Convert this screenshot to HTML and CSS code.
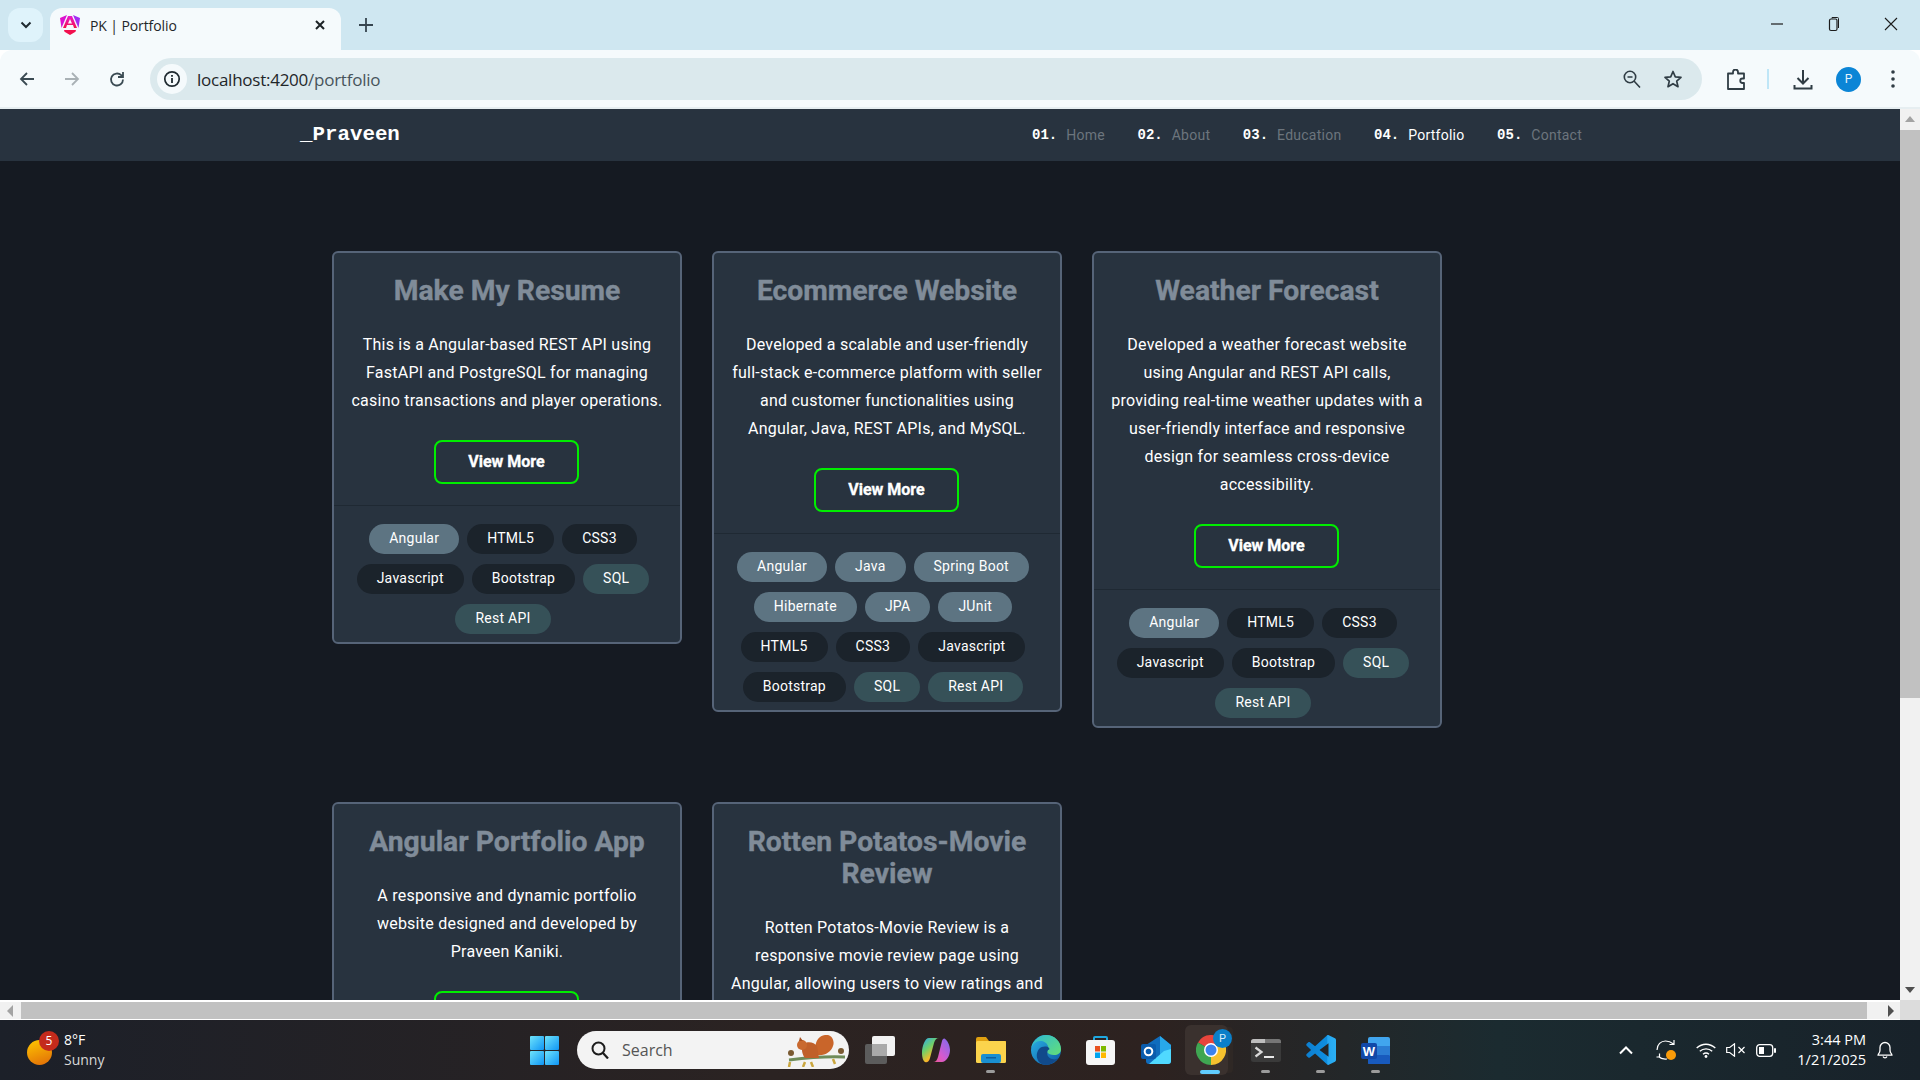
FILE: index.html
```html
<!DOCTYPE html>
<html lang="en">
<head>
<meta charset="utf-8">
<title>PK | Portfolio</title>
<link rel="stylesheet" href="styles.css">
</head>
<body>
<div class="screen">
  <header class="tabstrip">
    <div class="tabsearch"><svg width="12" height="8" viewBox="0 0 12 8"><path d="M1.500 1.500 6 6l4.500-4.500" fill="none" stroke="#1f2a30" stroke-width="2"/></svg></div>
    <div class="tab">
      <svg class="favicon" width="20" height="20" viewBox="0 0 20 20"><defs><linearGradient id="ng" x1="0" y1="0" x2="1" y2="1"><stop offset="0" stop-color="#f00bc0"/><stop offset="1" stop-color="#b81fe8"/></linearGradient><linearGradient id="ng2" x1="0" y1="0" x2="0" y2="1"><stop offset="0" stop-color="#e81ad0"/><stop offset="1" stop-color="#f5114a"/></linearGradient></defs><path d="M7 0 1.500 13 0 3z" fill="url(#ng)"/><path d="M13 0 18.500 13 20 3z" fill="#a32cf2"/><path d="M8 1h4l5 12h-3l-1-3H7l-1 3H3z" fill="url(#ng2)"/><path d="M10 4 8 8.500h4z" fill="#f6fafc"/><path d="M4 15h12l-.5 1.800L10 20l-5.500-3.200z" fill="#f2104e"/></svg>
      <span class="tabtitle">PK | Portfolio</span>
      <svg class="tabclose" width="12" height="12" viewBox="0 0 12 12"><path d="M2 2l8 8M10 2l-8 8" stroke="#1c2226" stroke-width="2"/></svg>
    </div>
    <svg class="newtab" width="14" height="14" viewBox="0 0 14 14"><path d="M7 0v14M0 7h14" stroke="#36454f" stroke-width="1.800"/></svg>
    <div class="wincontrols">
      <svg width="14" height="14" viewBox="0 0 14 14"><path d="M1 7h12" stroke="#1c1c1c" stroke-width="1.200"/></svg>
      <svg width="14" height="24" viewBox="0 0 14 24"><rect x="2.500" y="7" width="7.500" height="11.500" rx="1.500" fill="none" stroke="#1c1c1c" stroke-width="1.200"/><path d="M5 6.500V5.500h5.500a1 1 0 0 1 1 1V16" fill="none" stroke="#1c1c1c" stroke-width="1"/></svg>
      <svg width="14" height="14" viewBox="0 0 14 14"><path d="M1 1l12 12M13 1L1 13" stroke="#1c1c1c" stroke-width="1.100"/></svg>
    </div>
  </header>

  <div class="toolbar">
    <svg class="navicon" width="18" height="18" viewBox="0 0 18 18"><path d="M16 9H3M9 3 3 9l6 6" fill="none" stroke="#3a4a52" stroke-width="1.800"/></svg>
    <svg class="navicon" width="18" height="18" viewBox="0 0 18 18"><path d="M2 9h13M9 3l6 6-6 6" fill="none" stroke="#a9b1b5" stroke-width="1.800"/></svg>
    <svg class="navicon" width="18" height="18" viewBox="0 0 18 18"><path d="M15 9.500a6 6 0 1 1-1.800-4.300L15 7M15 2v5h-5" fill="none" stroke="#3a4a52" stroke-width="1.800"/></svg>
    <div class="omnibox">
      <div class="siteinfo"><svg width="18" height="18" viewBox="0 0 18 18"><circle cx="9" cy="9" r="7.200" fill="none" stroke="#1f2a30" stroke-width="1.700"/><path d="M9 8v5M9 5v1.800" stroke="#1f2a30" stroke-width="1.800"/></svg></div>
      <span class="url">localhost:4200<span class="urlpath">/portfolio</span></span>
      <svg class="omniicon" width="18" height="18" viewBox="0 0 18 18"><circle cx="7" cy="7" r="5.700" fill="none" stroke="#2f3c44" stroke-width="1.600"/><path d="M11 11l6 6.500M4.500 7h5" stroke="#2f3c44" stroke-width="1.600"/></svg>
      <svg class="omniicon star" width="20" height="19" viewBox="0 0 20 19"><path d="M10 1.500l2.300 5.300 5.700.5-4.300 3.800 1.300 5.600-5-3-5 3 1.300-5.600L2 7.300l5.700-.5z" fill="none" stroke="#2f3c44" stroke-width="1.700" stroke-linejoin="round"/></svg>
    </div>
    <svg class="ext" width="20" height="21" viewBox="0 0 20 21"><path d="M2 4.500h5V3a2.500 2.500 0 0 1 5 0v1.500h6v5h-1.500a2 2 0 0 0 0 4.500H18v6H2z" fill="none" stroke="#2f3c44" stroke-width="1.800" stroke-linejoin="round"/></svg>
    <span class="tooldivider"></span>
    <svg class="dl" width="20" height="21" viewBox="0 0 20 21"><path d="M10 1v13M4.500 9l5.500 5.500L15.500 9M1.500 16v3.500h17V16" fill="none" stroke="#2f3c44" stroke-width="2"/></svg>
    <span class="avatar">P</span>
    <svg class="kebab" width="6" height="20" viewBox="0 0 6 20"><circle cx="3" cy="3" r="1.800" fill="#2f3c44"/><circle cx="3" cy="10" r="1.800" fill="#2f3c44"/><circle cx="3" cy="17" r="1.800" fill="#2f3c44"/></svg>
  </div>

  <div class="viewport">
    <div class="pagewrap">
      <div class="page">
        <nav class="sitenav">
          <div class="logo">_Praveen</div>
          <ul class="navlinks">
            <li><b>01.</b><a>Home</a></li>
            <li><b>02.</b><a>About</a></li>
            <li><b>03.</b><a>Education</a></li>
            <li><b>04.</b><a class="active">Portfolio</a></li>
            <li><b>05.</b><a>Contact</a></li>
          </ul>
        </nav>
        <main class="grid">
          <article class="card">
            <div class="cardbody">
              <h2>Make My Resume</h2>
              <p>This is a Angular-based REST API using FastAPI and PostgreSQL for managing casino transactions and player operations.</p>
              <a class="more">View More</a>
            </div>
            <div class="tags">
              <span class="tag fw">Angular</span><span class="tag dk">HTML5</span><span class="tag dk">CSS3</span><span class="tag dk">Javascript</span><span class="tag dk">Bootstrap</span><span class="tag db">SQL</span><span class="tag db">Rest API</span>
            </div>
          </article>
          <article class="card">
            <div class="cardbody">
              <h2>Ecommerce Website</h2>
              <p>Developed a scalable and user-friendly full-stack e-commerce platform with seller and customer functionalities using Angular, Java, REST APIs, and MySQL.</p>
              <a class="more">View More</a>
            </div>
            <div class="tags">
              <span class="tag fw">Angular</span><span class="tag fw">Java</span><span class="tag fw">Spring Boot</span><span class="tag fw">Hibernate</span><span class="tag fw">JPA</span><span class="tag fw">JUnit</span><span class="tag dk">HTML5</span><span class="tag dk">CSS3</span><span class="tag dk">Javascript</span><span class="tag dk">Bootstrap</span><span class="tag db">SQL</span><span class="tag db">Rest API</span>
            </div>
          </article>
          <article class="card">
            <div class="cardbody">
              <h2>Weather Forecast</h2>
              <p>Developed a weather forecast website using Angular and REST API calls, providing real-time weather updates with a user-friendly interface and responsive design for seamless cross-device accessibility.</p>
              <a class="more">View More</a>
            </div>
            <div class="tags">
              <span class="tag fw">Angular</span><span class="tag dk">HTML5</span><span class="tag dk">CSS3</span><span class="tag dk">Javascript</span><span class="tag dk">Bootstrap</span><span class="tag db">SQL</span><span class="tag db">Rest API</span>
            </div>
          </article>
          <article class="card">
            <div class="cardbody">
              <h2>Angular Portfolio App</h2>
              <p>A responsive and dynamic portfolio website designed and developed by Praveen Kaniki.</p>
              <a class="more">View More</a>
            </div>
          </article>
          <article class="card">
            <div class="cardbody">
              <h2>Rotten Potatos-Movie Review</h2>
              <p>Rotten Potatos-Movie Review is a responsive movie review page using Angular, allowing users to view ratings and reviews.</p>
              <a class="more">View More</a>
            </div>
          </article>
        </main>
      </div>
      <div class="vscroll">
        <span class="arrow up"></span>
        <div class="vtrack"><div class="vthumb"></div></div>
        <span class="arrow down"></span>
      </div>
    </div>
    <div class="hscroll">
      <span class="harrow left"></span>
      <div class="htrack"><div class="hthumb"></div></div>
      <span class="harrow right"></span>
      <span class="corner"></span>
    </div>
  </div>

  <footer class="taskbar">
    <div class="weather">
      <span class="sun"><span class="badge">5</span></span>
      <div class="wtext"><span>8°F</span><span class="wsub">Sunny</span></div>
    </div>
    <div class="slot">
      <svg width="29" height="29" viewBox="0 0 30 30"><defs><linearGradient id="win" x1="0" y1="0" x2="1" y2="1"><stop offset="0" stop-color="#6fe4fb"/><stop offset="1" stop-color="#0f95f5"/></linearGradient></defs><rect width="14.500" height="14.500" rx="1" fill="url(#win)"/><rect x="15.500" width="14.500" height="14.500" rx="1" fill="url(#win)"/><rect y="15.500" width="14.500" height="14.500" rx="1" fill="url(#win)"/><rect x="15.500" y="15.500" width="14.500" height="14.500" rx="1" fill="url(#win)"/></svg>
    </div>
    <div class="search">
      <svg width="18" height="18" viewBox="0 0 18 18"><circle cx="7.500" cy="7.500" r="6" fill="none" stroke="#1c1c1c" stroke-width="2"/><path d="M12 12l5 5.500" stroke="#1c1c1c" stroke-width="2.200"/></svg>
      <span>Search</span>
      <svg class="squirrel" width="66" height="32" viewBox="0 0 66 32"><path d="M6 25c16-2 36-4 56-3" fill="none" stroke="#6f8c5a" stroke-width="3"/><path d="M34 20C30 10 34 1 42 0c7-1 10 6 8 11-2 6-8 10-16 9z" fill="#c9652a"/><path d="M20 9c5-3 11-2 14 2l2 12H22c-3-3-4-10-2-14z" fill="#c0602a"/><circle cx="19" cy="10" r="5" fill="#c9692f"/><path d="M16 6l1-4 3 4z" fill="#a8501f"/><circle cx="8" cy="18" r="3" fill="#7a5a32"/><circle cx="58" cy="16" r="3" fill="#7a5a32"/><path d="M7 27l-1 5M22 27l-2 5M28 27l2 5M50 24l2 5" stroke="#cba73f" stroke-width="2.500"/></svg>
    </div>
    <div class="slot first">
      <svg width="31" height="28" viewBox="0 0 31 28"><rect x="0" y="8" width="22" height="20" rx="2" fill="#5c5c5c"/><rect x="7" y="0" width="23" height="20" rx="2" fill="#f2f2f2"/><rect x="7" y="8" width="15" height="12" fill="#aaa"/></svg>
    </div>
    <div class="slot">
      <svg width="28" height="26" viewBox="0 0 28 26"><defs><linearGradient id="cop" x1="0" y1="0" x2=".6" y2="1"><stop offset="0" stop-color="#2aa8f0"/><stop offset=".45" stop-color="#6fd06a"/><stop offset=".8" stop-color="#f4bc2a"/><stop offset="1" stop-color="#f0703a"/></linearGradient><linearGradient id="cop2" x1="1" y1="0" x2="0" y2="1"><stop offset="0" stop-color="#7a6cf0"/><stop offset=".6" stop-color="#d45ad0"/><stop offset="1" stop-color="#f05a90"/></linearGradient></defs><path d="M7 1h10c-3 0-4 2-5 5L8 21c-1 4-3 5-5 4-2-1-3-5-3-9C0 9 3 1 7 1z" fill="url(#cop)"/><path d="M20 25h-9c3 0 4-2 5-5l4-16c.5-2 2-3 3-2 2 1 5 6 5 11 0 6-4 12-8 12z" fill="url(#cop2)"/></svg>
    </div>
    <div class="slot">
      <svg width="30" height="26" viewBox="0 0 30 26"><path d="M0 2a2 2 0 0 1 2-2h8l3 4h17v20H0z" fill="#e0a010"/><rect y="4" width="30" height="22" rx="1.500" fill="#fbd34c"/><rect x="5" y="17" width="20" height="9" rx="2" fill="#1a8fd1"/><rect x="10" y="20" width="10" height="1.500" fill="#0f5f9e"/></svg>
      <i class="indicator"></i>
    </div>
    <div class="slot">
      <svg width="30" height="30" viewBox="0 0 30 30"><defs><linearGradient id="edge" x1="0" y1="0" x2="1" y2="1"><stop offset="0" stop-color="#2bb4e6"/><stop offset="1" stop-color="#0c59a4"/></linearGradient><linearGradient id="edge2" x1="0" y1="0" x2="1" y2=".8"><stop offset="0" stop-color="#2cb8d8"/><stop offset="1" stop-color="#5fdc7f"/></linearGradient></defs><circle cx="15" cy="15" r="15" fill="url(#edge)"/><path d="M15 0c9 0 15 7 15 14 0 4-3 6-7 6-3 0-6-1-7-3-1-2 2-3 1-6-1-3-4-5-8-5-4 0-7 3-9 7C2 6 8 0 15 0z" fill="url(#edge2)"/><path d="M17 15c-2 4 0 8 4 9 3 1 5 0 6-1-3 4-7 7-12 7-3 0-5-1-7-3-3-4-3-9 0-13 3-3 8-3 10-1 1 1 0 2-1 2z" fill="#114a8b"/></svg>
    </div>
    <div class="slot">
      <svg width="29" height="29" viewBox="0 0 29 29"><path d="M8 5V2a1 1 0 0 1 1-1h11a1 1 0 0 1 1 1v3" fill="none" stroke="#1fa8e0" stroke-width="2"/><rect y="4" width="29" height="25" rx="3" fill="#f6f6f6"/><rect x="9" y="10" width="5" height="5.500" fill="#e8511f"/><rect x="15" y="10" width="5" height="5.500" fill="#7fba00"/><rect x="9" y="16.500" width="5" height="5.500" fill="#00a4ef"/><rect x="15" y="16.500" width="5" height="5.500" fill="#ffb900"/></svg>
    </div>
    <div class="slot">
      <svg width="30" height="28" viewBox="0 0 30 28"><path d="M5 9 19 0l11 9v16a3 3 0 0 1-3 3H8a3 3 0 0 1-3-3z" fill="#0f6cbd"/><path d="M19 0l11 9v6L19 22z" fill="#28a8ea"/><path d="M8 28l15-13 7-2v12a3 3 0 0 1-3 3z" fill="#50d9ff"/><rect y="8" width="15" height="15" rx="2" fill="#0a5cad"/><circle cx="7.500" cy="15.500" r="3.800" fill="none" stroke="#fff" stroke-width="2"/></svg>
    </div>
    <div class="slot chrome">
      <span class="hover"></span>
      <svg width="30" height="30" viewBox="0 0 30 30"><path d="M15 15 2 7.500A15 15 0 0 1 28 7.500z" fill="#e8453c"/><path d="M15 15 28 7.500A15 15 0 0 1 15 30z" fill="#f5c12e"/><path d="M15 15V30A15 15 0 0 1 2 7.500z" fill="#3fa652"/><circle cx="15" cy="15" r="7" fill="#fff"/><circle cx="15" cy="15" r="5.500" fill="#3b82ee"/></svg>
      <span class="pbadge">P</span>
      <i class="indicator active"></i>
    </div>
    <div class="slot">
      <svg width="30" height="23" viewBox="0 0 30 23"><rect width="30" height="23" rx="2.500" fill="#3a3a3a"/><path d="M2.500 0h12v4H0V2.500A2.500 2.500 0 0 1 2.500 0z" fill="#bdbdbd"/><path d="M14.500 0h13A2.500 2.500 0 0 1 30 2.500V4H14.500z" fill="#767676"/><path d="M4.500 8.500l6 4.500-6 4.500" fill="none" stroke="#d8d8d8" stroke-width="2.200"/><path d="M13 18h10" stroke="#e8e8e8" stroke-width="2"/></svg>
      <i class="indicator"></i>
    </div>
    <div class="slot">
      <svg width="30" height="30" viewBox="0 0 100 100"><defs><linearGradient id="vs" x1="0" y1="0" x2="1" y2="0"><stop offset="0" stop-color="#0d7fd0"/><stop offset=".7" stop-color="#0f8fe0"/><stop offset=".72" stop-color="#25a6f0"/><stop offset="1" stop-color="#2bb0f5"/></linearGradient></defs><path fill="url(#vs)" fill-rule="evenodd" d="M70.900 99.300c1.600.6 3.400.6 5-.2l20.600-9.900c2.200-1 3.500-3.200 3.500-5.600V16.400c0-2.400-1.400-4.600-3.500-5.600L75.900.9c-2-1-4.500-.8-6.200.5L30.200 37.400 13 24.300c-1.600-1.200-3.800-1.100-5.300.2l-5.500 5c-1.800 1.600-1.800 4.500 0 6.100L17 50 2.200 63.500c-1.800 1.600-1.800 4.500 0 6.100l5.500 5c1.500 1.300 3.700 1.400 5.300.2l17.200-13.100 39.500 36c.6.6 1.300 1 2.200 1.300zM75 27.300 45 50l30 22.700z"/></svg>
      <i class="indicator"></i>
    </div>
    <div class="slot">
      <svg width="29" height="27" viewBox="0 0 29 27"><rect x="7" width="22" height="27" rx="2" fill="#41a5ee"/><rect x="7" y="9" width="22" height="9" fill="#2b7cd3"/><rect x="7" y="18" width="22" height="9" rx="1" fill="#185abd"/><rect y="6" width="16" height="16" rx="2" fill="#1149a8"/><text x="8" y="19" class="wordw">W</text></svg>
      <i class="indicator"></i>
    </div>
    <div class="tray">
      <svg class="chev" width="14" height="9" viewBox="0 0 14 9"><path d="M1 7.500 7 1.500l6 6" fill="none" stroke="#fff" stroke-width="2"/></svg>
      <svg class="sync" width="20" height="20" viewBox="0 0 20 20"><path d="M1 10C1 4.500 5 1 9.500 1c3 0 5.500 1 8 3M18 0v4.500h-4.500M11 19c-4 .5-6.500-.5-8.500-2.500M3.500 13.500V17H.5" fill="none" stroke="#fff" stroke-width="1.200"/><circle cx="15" cy="15" r="5" fill="#f99b09"/></svg>
      <svg class="wifi" width="20" height="15" viewBox="0 0 20 15"><path d="M.7 5c5.500-5 13-5 18.600 0M3.800 8.300c3.500-3.300 9-3.300 12.400 0M7 11.200c1.800-1.400 4.200-1.400 6 0" fill="none" stroke="#fff" stroke-width="1.400"/><circle cx="10" cy="13.500" r="1.400" fill="#fff"/></svg>
      <svg class="vol" width="19" height="14" viewBox="0 0 19 14"><path d="M.7 4.500h3L8.500.8v12.400l-4.800-3.700h-3z" fill="none" stroke="#fff" stroke-width="1.200"/><path d="M12.500 4l6 6M18.500 4l-6 6" stroke="#fff" stroke-width="1.200"/></svg>
      <svg class="batt" width="20" height="13" viewBox="0 0 20 13"><rect x=".7" y=".7" width="16" height="11.600" rx="3" fill="none" stroke="#fff" stroke-width="1.300"/><rect x="3" y="3" width="5" height="7" fill="#fff"/><rect x="18" y="4" width="2" height="5" rx="1" fill="#fff"/></svg>
      <div class="clock"><span>3:44 PM</span><span>1/21/2025</span></div>
      <svg class="bell" width="16" height="18" viewBox="0 0 16 18"><path d="M1.500 13c1-1 1.500-2 1.500-4V6.500a5 5 0 0 1 10 0V9c0 2 .5 3 1.500 4l.5 1.200H1zM6 15.500a2.200 2.200 0 0 0 4 0" fill="none" stroke="#fff" stroke-width="1.300" stroke-linejoin="round"/></svg>
    </div>
  </footer>
</div>
</body>
</html>
```
FILE: styles.css
```css
* { box-sizing: border-box; }
html, body { margin: 0; height: 100%; overflow: hidden; }
body { font-family: Roboto, "Liberation Sans", sans-serif; }
.screen { width: 1920px; height: 1080px; display: flex; flex-direction: column; overflow: hidden; }

/* Browser tab strip */
.tabstrip { height: 50px; background: #cfe7f1; display: flex; align-items: flex-start; flex: none; }
.tabsearch { width: 35px; height: 34px; margin: 8px 0 0 8px; border-radius: 12px; background: #dff3fb; display: flex; align-items: center; justify-content: center; flex: none; }
.tab { width: 291px; height: 42px; margin: 8px 0 0 7px; background: #f5fafc; border-radius: 12px 12px 0 0; display: flex; align-items: center; padding: 0 15px 8px 10px; flex: none; }
.favicon { flex: none; }
.tabtitle { font: 14px "Open Sans", "Noto Sans", sans-serif; color: #1f2629; margin-left: 10px; flex: 1; letter-spacing: -.1px; }
.newtab { margin: 18px 0 0 18px; flex: none; }
.wincontrols { margin-left: auto; display: flex; align-items: center; height: 24px; margin-top: 12px; gap: 43px; padding-right: 22px; }

/* Browser toolbar */
.toolbar { height: 59px; background: #f5fafc; border-radius: 12px 12px 0 0; display: flex; align-items: center; padding: 1px 0 0 18px; flex: none; border-bottom: 2px solid #e6eef1; }
.navicon { margin-right: 27px; flex: none; }
.omnibox { width: 1552px; height: 42px; margin-left: -3px; background: #dbe9ed; border-radius: 21px; display: flex; align-items: center; padding: 0 19px 0 7px; flex: none; }
.siteinfo { width: 30px; height: 30px; border-radius: 50%; background: #f5fafc; display: flex; align-items: center; justify-content: center; flex: none; }
.url { font: 17px "Open Sans", "Noto Sans", sans-serif; color: #1f2629; margin-left: 10px; flex: 1; letter-spacing: -.25px; }
.urlpath { color: #47545b; }
.omniicon { margin-left: 22px; flex: none; }
.omniicon.star { margin-left: 22px; }
.ext { margin-left: 24px; flex: none; }
.tooldivider { width: 2px; height: 20px; background: #bfe6f7; margin-left: 21px; flex: none; }
.dl { margin-left: 24px; flex: none; }
.avatar { width: 25px; height: 25px; border-radius: 50%; background: #0b85d6; color: #e8f4fb; font-size: 12px; display: flex; align-items: center; justify-content: center; margin-left: 23px; flex: none; }
.kebab { margin-left: 29px; flex: none; }

/* Browser viewport */
.viewport { height: 911px; flex: none; display: flex; flex-direction: column; background: #151a22; }
.pagewrap { display: flex; height: 891px; flex: none; overflow: hidden; }
.page { width: 1900px; flex: none; background: #151a22; overflow: hidden; }

.sitenav { height: 52px; background: #28333f; display: flex; align-items: center; padding: 0 0 1px 300px; }
.logo { font: bold 20.800px "Liberation Mono", monospace; color: #fff; width: 732px; }
.navlinks { list-style: none; display: flex; margin: 0; padding: 0; gap: 32.600px; font-size: 14px; }
.navlinks li { display: flex; align-items: center; gap: 9px; white-space: nowrap; }
.navlinks b { font: bold 14px "Liberation Mono", monospace; color: #fff; }
.navlinks a { color: #6c757d; letter-spacing: .25px; }
.navlinks a.active { color: #fff; }

.grid { display: grid; grid-template-columns: repeat(3, 350px); column-gap: 30px; row-gap: 74px; align-items: start; padding: 90px 0 0 332px; }
.card { background: #28333f; border: 2px solid #566478; border-radius: 6px; }
.cardbody { padding: 22px 16px 21px; text-align: center; }
.card h2 { margin: 0 0 24px; font-size: 28.300px; line-height: 32px; font-weight: 700; color: #808c99; -webkit-text-stroke: .4px #808c99; }
.card p { margin: 0 0 25px; font-size: 16px; line-height: 28px; letter-spacing: .24px; color: #fff; }
.more { display: block; width: 145px; height: 44px; margin: 0 0 0 84px; border: 2px solid #00ee00; border-radius: 8px; font-weight: 700; font-size: 16px; line-height: 40px; color: #fff; -webkit-text-stroke: .35px #fff; }
.tags { border-top: 1px solid #1f2933; padding: 18px 16px 8px; display: flex; flex-wrap: wrap; justify-content: center; gap: 10px 0; }
.tag { height: 30px; line-height: 29px; padding: 0 20px; margin-right: 8px; border-radius: 15px; font-size: 14px; letter-spacing: .25px; color: #fff; white-space: nowrap; }
.fw { background: #5d7482; }
.dk { background: #1b232b; }
.db { background: #365158; }

/* Scrollbars */
.vscroll { width: 20px; flex: none; background: #f1f1f1; display: flex; flex-direction: column; align-items: center; }
.vtrack { flex: 1; width: 100%; }
.vthumb { width: 100%; height: 568px; background: #c1c1c1; margin-top: 1px; }
.arrow { width: 0; height: 0; border-left: 5px solid transparent; border-right: 5px solid transparent; margin: 7px 0; flex: none; }
.arrow.up { border-bottom: 6px solid #a3a3a3; }
.arrow.down { border-top: 6px solid #505050; }
.hscroll { height: 20px; flex: none; background: #f1f1f1; display: flex; align-items: center; border-top: 2px solid #fff; border-bottom: 1px solid #fff; }
.htrack { flex: 1; height: 100%; }
.hthumb { width: 1846px; height: 100%; background: #c1c1c1; }
.harrow { width: 0; height: 0; border-top: 6px solid transparent; border-bottom: 6px solid transparent; flex: none; }
.harrow.left { border-right: 6px solid #a3a3a3; margin: 0 8px 0 7px; }
.harrow.right { border-left: 6px solid #505050; margin: 0 6px; }
.corner { width: 20px; height: 20px; align-self: flex-start; margin-top: -2px; background: #dcdcdc; flex: none; }

/* Windows taskbar */
.taskbar { height: 60px; flex: none; background: linear-gradient(90deg, #1c2029 0%, #2b2322 40%, #2d2220 60%, #1b2b30 78%, #18222a 100%); display: flex; align-items: center; color: #fff; }
.weather { display: flex; align-items: center; width: 517px; padding-left: 27px; flex: none; }
.sun { width: 25px; height: 25px; border-radius: 50%; background: linear-gradient(160deg, #ffc800, #e06a08); position: relative; margin-top: 4px; flex: none; }
.badge { position: absolute; top: -9px; left: 12px; width: 20px; height: 20px; border-radius: 50%; background: #c42b1c; font: 12px "Open Sans", sans-serif; display: flex; align-items: center; justify-content: center; }
.wtext { display: flex; flex-direction: column; margin-left: 12px; font: 14px/20px "Open Sans", "Noto Sans", sans-serif; }
.wsub { color: #d8d8d8; }
.slot { width: 55px; height: 60px; flex: none; display: flex; align-items: center; justify-content: center; position: relative; }
.slot.first { margin-left: 4px; }
.search { width: 272px; height: 38px; margin-left: 5px; border-radius: 19px; background: #f3f3f3; display: flex; align-items: center; padding-left: 14px; position: relative; font: 16px "Open Sans", "Noto Sans", sans-serif; color: #555; flex: none; }
.search span { margin-left: 13px; }
.squirrel { position: absolute; right: 0; top: 4px; }
.hover { position: absolute; left: 2px; top: 5px; width: 43px; height: 50px; background: #3a312e; border-radius: 6px; box-shadow: 7px 0 0 -2px #2f2825; }
.chrome svg { position: relative; }
.pbadge { position: absolute; top: 9px; left: 30px; width: 19px; height: 19px; border-radius: 50%; background: #0b7fc9; color: #d9eef9; font-size: 11px; display: flex; align-items: center; justify-content: center; }
.indicator { position: absolute; top: 50px; left: 23px; width: 9px; height: 3px; border-radius: 2px; background: #9b9b9b; }
.indicator.active { left: 17px; width: 20px; height: 4px; background: #60cdff; }
.wordw { font: bold 13px "Liberation Sans", sans-serif; fill: #fff; text-anchor: middle; }
.tray { display: flex; align-items: center; margin-left: auto; height: 60px; padding-right: 27px; }
.sync { margin-left: 23px; }
.wifi { margin-left: 20px; }
.vol { margin-left: 10px; }
.batt { margin-left: 11px; }
.clock { margin-left: 20px; width: 70px; display: flex; flex-direction: column; align-items: flex-end; font: 14.500px/20px "Open Sans", "Noto Sans", sans-serif; white-space: nowrap; }
.bell { margin-left: 11px; }
```
